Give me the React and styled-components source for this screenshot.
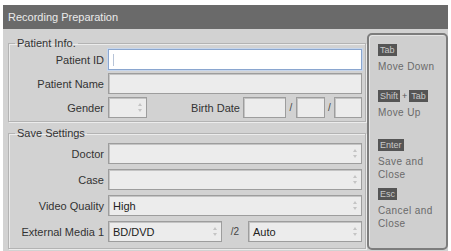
import React from 'react';
import styled, { createGlobalStyle } from 'styled-components';

const GlobalStyle = createGlobalStyle`
  html, body {
    margin: 0;
    padding: 0;
    background: #ffffff;
  }
  body {
    font-family: "Liberation Sans", Arial, sans-serif;
  }
`;

const Window = styled.div`
  margin: 5px 3px 0 3px;
  width: 445px;
  height: 246px;
  background: #d2d2d2;
  display: flex;
  flex-direction: column;
  overflow: hidden;
`;

const TitleBar = styled.div`
  height: 24px;
  flex-shrink: 0;
  background: #6a6a6a;
  color: #ebebeb;
  font-size: 11px;
  display: flex;
  align-items: center;
  padding-left: 5px;
`;

const Body = styled.div`
  display: flex;
  padding: 4px 0 0 5px;
  gap: 1px;
`;

const Left = styled.div`
  width: 358px;
  padding-top: 4px;
  display: flex;
  flex-direction: column;
  gap: 5px;
`;

const Group = styled.fieldset`
  margin: 0;
  min-width: 0;
  border: 1px solid #b3b3b3;
  box-shadow: inset 1px 1px 0 #ececec, 1px 1px 0 #ececec;
  padding: ${p => p.$pt}px 3px 2px 0;
  display: flex;
  flex-direction: column;
  gap: ${p => p.$gap}px;
  height: ${p => p.$h}px;
  box-sizing: border-box;
`;

const Legend = styled.legend`
  font-size: 11px;
  color: #333;
  padding: 0 2px;
  margin-left: 6px;
  line-height: 12px;
`;

const Row = styled.div`
  display: flex;
  align-items: center;
  height: 21px;
`;

const Label = styled.span`
  width: 95px;
  margin-right: 4px;
  text-align: right;
  font-size: 11px;
  color: #333;
  flex-shrink: 0;
`;

const Field = styled.div`
  box-sizing: border-box;
  height: 21px;
  width: ${p => (p.$w ? `${p.$w}px` : 'auto')};
  flex: ${p => (p.$w ? 'none' : '1')};
  background: ${p => (p.$focus ? '#ffffff' : '#ececec')};
  border: 1px solid ${p => (p.$focus ? '#8aa6cf' : '#9d9d9d')};
  box-shadow: ${p => (p.$focus ? '0 0 0 1px #c7d6ec' : 'inset 1px 1px 0 #c4c4c4')};
  display: flex;
  align-items: center;
  padding: 0 4px;
  font-size: 11px;
  color: #222;
`;

const Caret = styled.span`
  width: 1px;
  height: 12px;
  background: #b7c4d8;
`;

const Value = styled.span`
  flex: 1;
`;

const Sep = styled.span`
  font-size: 10px;
  color: #444;
  width: ${p => p.$w}px;
  text-align: center;
  flex-shrink: 0;
`;

const Spacer = styled.span`
  width: ${p => p.$w}px;
  padding-right: 3px;
  box-sizing: border-box;
  flex-shrink: 0;
  font-size: 11px;
  color: #333;
  text-align: right;
`;

const Panel = styled.div`
  width: 81px;
  height: 217px;
  box-sizing: border-box;
  border: 2px solid #7d7d7d;
  border-radius: 5px;
  background: #cfcfcf;
  box-shadow: inset 1px 1px 0 #e6e6e6;
  padding: 9px 0 0 9px;
  display: flex;
  flex-direction: column;
`;

const Hint = styled.div`
  display: flex;
  flex-direction: column;
  gap: 4px;
  margin-bottom: ${p => p.$mb}px;
`;

const Keys = styled.div`
  display: flex;
  align-items: center;
  gap: 2px;
  font-size: 9px;
  color: #555;
`;

const Key = styled.span`
  background: #555555;
  color: #c9c9c9;
  font-size: 9px;
  padding: 0 2px;
  height: 12px;
  line-height: 12px;
`;

const HintText = styled.div`
  font-size: 10px;
  color: #6a6a6a;
  line-height: 13px;
  letter-spacing: 0.4px;
`;

const Arrow = () => (
  <svg width="4" height="9" viewBox="0 0 4 9">
    <path d="M2 0 L4 3 L0 3 Z M2 9 L4 6 L0 6 Z" fill="#c4c4c4" />
  </svg>
);

const Select = ({ value, w }) => (
  <Field $w={w}>
    <Value>{value}</Value>
    <Arrow />
  </Field>
);

export default function App() {
  return (
    <>
      <GlobalStyle />
      <Window>
        <TitleBar>Recording Preparation</TitleBar>
        <Body>
          <Left>
            <Group $h={85} $gap={3} $pt={0}>
              <Legend>Patient Info.</Legend>
              <Row>
                <Label>Patient ID</Label>
                <Field $focus><Caret /></Field>
              </Row>
              <Row>
                <Label>Patient Name</Label>
                <Field />
              </Row>
              <Row>
                <Label>Gender</Label>
                <Select w={39} />
                <Spacer $w={96}>Birth Date</Spacer>
                <Field $w={43} />
                <Sep $w={10}>/</Sep>
                <Field $w={29} />
                <Sep $w={9}>/</Sep>
                <Field $w={28} />
              </Row>
            </Group>
            <Group $h={122} $gap={5} $pt={4}>
              <Legend>Save Settings</Legend>
              <Row>
                <Label>Doctor</Label>
                <Select />
              </Row>
              <Row>
                <Label>Case</Label>
                <Select />
              </Row>
              <Row>
                <Label>Video Quality</Label>
                <Select value="High" />
              </Row>
              <Row>
                <Label>External Media 1</Label>
                <Select value="BD/DVD" w={114} />
                <Sep $w={26}>/2</Sep>
                <Select value="Auto" />
              </Row>
            </Group>
          </Left>
          <Panel>
            <Hint $mb={17}>
              <Keys><Key>Tab</Key></Keys>
              <HintText>Move Down</HintText>
            </Hint>
            <Hint $mb={20}>
              <Keys><Key>Shift</Key>+<Key>Tab</Key></Keys>
              <HintText>Move Up</HintText>
            </Hint>
            <Hint $mb={7}>
              <Keys><Key>Enter</Key></Keys>
              <HintText>Save and<br />Close</HintText>
            </Hint>
            <Hint $mb={0}>
              <Keys><Key>Esc</Key></Keys>
              <HintText>Cancel and<br />Close</HintText>
            </Hint>
          </Panel>
        </Body>
      </Window>
    </>
  );
}
